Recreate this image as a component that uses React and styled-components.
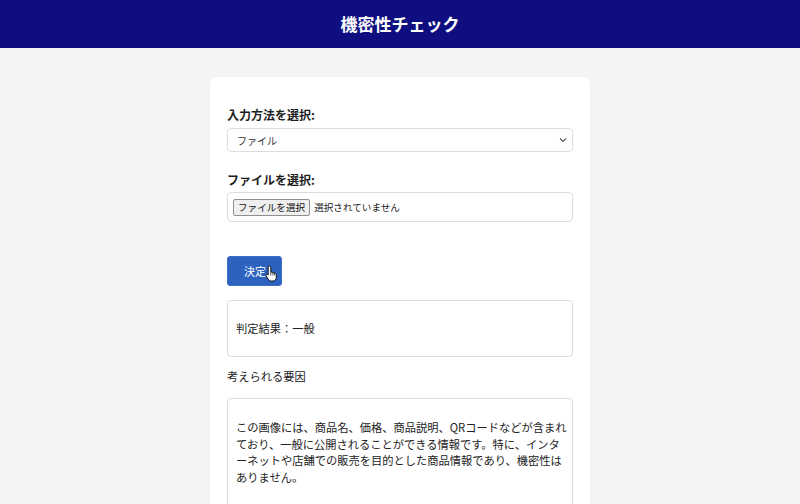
import React from 'react';
import styled, { createGlobalStyle } from 'styled-components';

const GlobalStyle = createGlobalStyle`
  html, body {
    overflow: hidden;
  }
  body {
    margin: 0;
    background: #f4f4f4;
    font-family: "Noto Sans CJK JP", "Noto Sans", sans-serif;
    color: #222;
  }
`;

const Header = styled.header`
  height: 48px;
  background: #0e0e80;
  display: flex;
  align-items: center;
  justify-content: center;

  h1 {
    margin: 0;
    font-size: 17px;
    font-weight: 700;
    color: #fff;
    line-height: 20px;
  }
`;

const Main = styled.main`
  display: flex;
  justify-content: center;
  padding-top: 29px;
`;

const Card = styled.section`
  width: 380px;
  box-sizing: border-box;
  min-height: 480px;
  background: #fff;
  border-radius: 6px;
  padding: 30px 17px 40px;
  box-shadow: 0 0 3px rgba(0, 0, 0, 0.03);
`;

const Field = styled.div`
  display: flex;
  flex-direction: column;
  gap: ${(p) => p.gap || 5}px;
  margin-bottom: ${(p) => p.bottom || 0}px;
`;

const Label = styled.label`
  font-size: 12px;
  font-weight: 700;
  line-height: 16px;
  color: #1e1e1e;
`;

const SelectWrap = styled.div`
  position: relative;
  height: 24px;

  svg {
    position: absolute;
    right: 6px;
    top: 9px;
    pointer-events: none;
  }
`;

const Select = styled.select`
  appearance: none;
  display: block;
  width: 100%;
  height: 24px;
  box-sizing: border-box;
  border: 1px solid #dcdcdc;
  border-radius: 4px;
  background: #fff;
  padding: 0 0 0 9px;
  font-family: inherit;
  font-size: 10px;
  color: #333;
  outline: none;
`;

const FileBox = styled.label`
  height: 30px;
  box-sizing: border-box;
  border: 1px solid #dcdcdc;
  border-radius: 4px;
  display: flex;
  align-items: center;
  gap: 4px;
  padding-left: 5px;
  font-size: 9.6px;
  color: #222;

  input {
    display: none;
  }
`;

const FileButton = styled.span`
  height: 17px;
  box-sizing: border-box;
  display: flex;
  align-items: center;
  padding: 0 4px;
  background: #efefef;
  border: 1px solid #8f8f8f;
  border-radius: 2px;
  font-size: 9.6px;
  color: #111;
`;

const ButtonWrap = styled.div`
  position: relative;
  display: inline-block;
  margin-top: 34px;

  svg {
    position: absolute;
    left: 38px;
    top: 9px;
  }
`;

const SubmitButton = styled.button`
  width: 55px;
  height: 30px;
  background: #2d63bf;
  border: 1px solid #3a70c8;
  border-radius: 3px;
  color: #fff;
  font-family: inherit;
  font-size: 11px;
  text-align: left;
  padding: 0 0 0 16px;
  display: block;
`;

const ResultBox = styled.div`
  margin-top: ${(p) => p.top || 14}px;
  border: 1px solid #dcdcdc;
  border-radius: 4px;
  padding: ${(p) => p.pad || 19}px 8px;
  font-size: 11.25px;
  line-height: ${(p) => p.lh || 17}px;
  color: #222;
  white-space: nowrap;
`;

const Heading = styled.div`
  margin-top: 11px;
  font-size: 11.25px;
  line-height: 17px;
  color: #222;
`;

const HandCursor = () => (
  <svg width="13" height="17" viewBox="0 0 13 17">
    <path
      d="M4.5 1C5.3 1 5.8 1.6 5.8 2.4V7.4C6.4 6.8 7.6 6.9 7.9 7.8C8.6 7.3 9.5 7.7 9.6 8.5C10.3 8.1 11.3 8.5 11.3 9.4V12.5C11.3 14.6 10 16 8 16H6.2C4.9 16 4.1 15.4 3.5 14.5L1.2 11C0.8 10.4 1 9.7 1.6 9.4C2.2 9.1 2.8 9.3 3.2 9.9V2.4C3.2 1.6 3.7 1 4.5 1Z"
      fill="#fff"
      stroke="#000"
      strokeWidth="0.9"
      strokeLinejoin="round"
    />
    <path d="M7.9 7.8V10.5M9.6 8.5V10.5M5.8 7.4V10.5" stroke="#000" strokeWidth="0.7" />
  </svg>
);

const Chevron = () => (
  <svg width="8" height="6" viewBox="0 0 8 6">
    <path d="M1 1.5L4 4.5L7 1.5" fill="none" stroke="#555" strokeWidth="1.1" />
  </svg>
);

const App = () => {
  const [mode, setMode] = React.useState('file');

  return (
    <>
      <GlobalStyle />
      <Header>
        <h1>機密性チェック</h1>
      </Header>
      <Main>
        <Card>
          <Field bottom={20}>
            <Label htmlFor="mode">入力方法を選択:</Label>
            <SelectWrap>
              <Select id="mode" value={mode} onChange={(e) => setMode(e.target.value)}>
                <option value="file">ファイル</option>
                <option value="text">テキスト</option>
              </Select>
              <Chevron />
            </SelectWrap>
          </Field>
          <Field gap={4}>
            <Label>ファイルを選択:</Label>
            <FileBox>
              <input type="file" />
              <FileButton>ファイルを選択</FileButton>
              選択されていません
            </FileBox>
          </Field>
          <ButtonWrap>
            <SubmitButton>決定</SubmitButton>
            <HandCursor />
          </ButtonWrap>
          <ResultBox>判定結果：一般</ResultBox>
          <Heading>考えられる要因</Heading>
          <ResultBox top={13} pad={20} lh={16.5}>
            この画像には、商品名、価格、商品説明、QRコードなどが含まれ
            <br />
            ており、一般に公開されることができる情報です。特に、インタ
            <br />
            ーネットや店舗での販売を目的とした商品情報であり、機密性は
            <br />
            ありません。
            <br />
            <br />
          </ResultBox>
        </Card>
      </Main>
    </>
  );
};

export default App;
